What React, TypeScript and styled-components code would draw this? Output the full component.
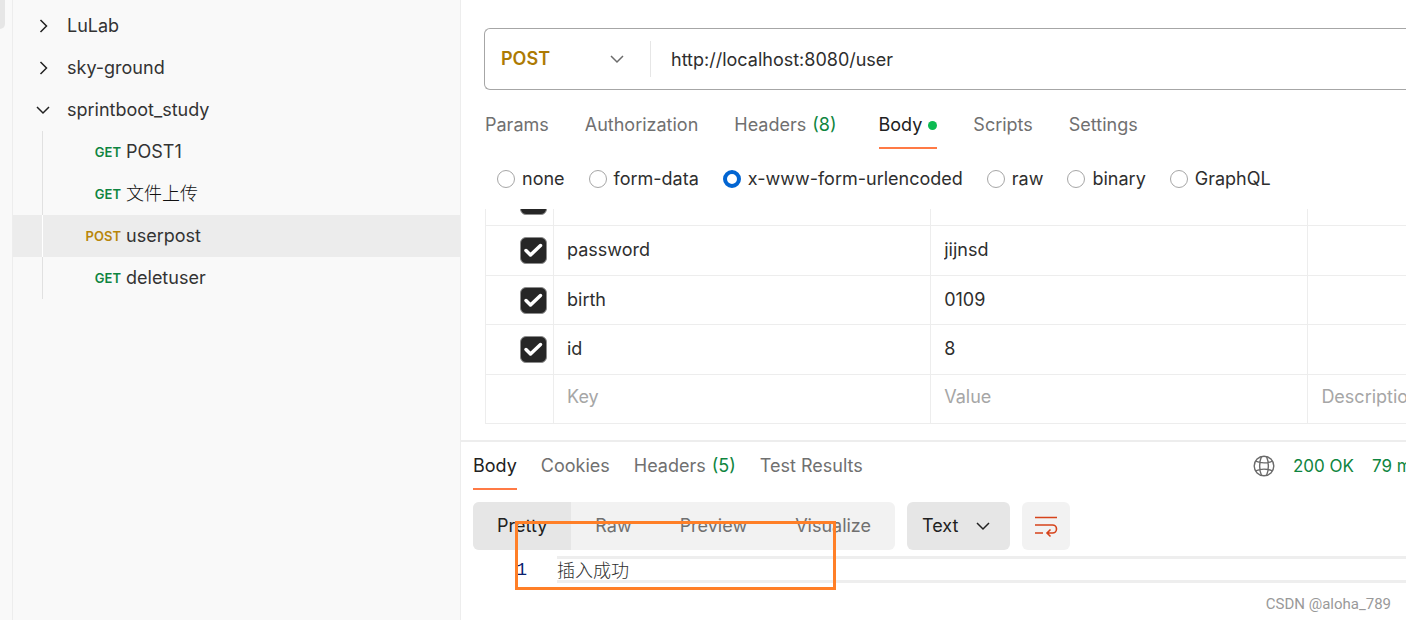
import React, { useState } from "react";
import styled, { createGlobalStyle } from "styled-components";

const GlobalStyle = createGlobalStyle`
  *, *::before, *::after { box-sizing: border-box; }
  body {
    margin: 0;
    background: #fff;
    color: #2e2e2e;
    font: 400 18px/24px Inter, "Noto Sans CJK SC", sans-serif;
    overflow: hidden;
  }
  button, input, select { font: inherit; color: inherit; }
  button { border: 0; padding: 0; background: none; cursor: pointer; }
`;

const Page = styled.div`
  position: relative;
  display: flex;
  min-height: 100vh;
`;

const Rail = styled.div`
  flex: 0 0 13px;
  background: #f9f9f9;
  border-right: 1px solid #ededed;
`;

const RailThumb = styled.div`
  width: 5px;
  height: 29px;
  background: #e6e6e6;
  border-bottom-right-radius: 5px;
`;

const Sidebar = styled.nav`
  flex: 0 0 448px;
  padding-top: 5px;
  background: #f9f9f9;
  border-right: 1px solid #ededed;
`;

const Collection = styled.button`
  display: flex;
  align-items: center;
  gap: 17px;
  width: 100%;
  height: 42px;
  padding-left: 23px;
  color: #333;
`;

const RequestRow = styled.a<{ $active?: boolean }>`
  display: flex;
  align-items: center;
  gap: 5px;
  height: 42px;
  padding-left: 29px;
  color: #333;
  text-decoration: none;
  background: ${(p) => (p.$active ? "#ececec" : "transparent")};
  &::before {
    content: "";
    align-self: stretch;
    width: 1px;
    background: ${(p) => (p.$active ? "#fff" : "#e1e1e1")};
  }
`;

const MethodTag = styled.span<{ $post?: boolean }>`
  width: 73px;
  font-size: 13px;
  font-weight: 600;
  text-align: right;
  color: ${(p) => (p.$post ? "#b8860b" : "#0f8540")};
`;

const RequestName = styled.span`
  &:lang(zh) { font-weight: 300; color: #111; }
`;

const Main = styled.main`
  flex: 1;
  min-width: 0;
  overflow: hidden;
`;

const RequestPane = styled.section`
  padding: 28px 0 16px 24px;
  border-bottom: 2px solid #ededed;
`;

const UrlBar = styled.div`
  display: flex;
  align-items: center;
  height: 62px;
  margin-left: -1px;
  border: 1px solid #a6a6a6;
  border-right: 0;
  border-radius: 6px 0 0 6px;
`;

const SelectShell = styled.div`
  display: grid;
  flex: 0 0 166px;
  align-items: center;
  border-right: 1px solid #e6e6e6;
  > * { grid-area: 1 / 1; }
  > svg {
    justify-self: end;
    margin-right: 26px;
    pointer-events: none;
  }
`;

const MethodSelect = styled.select`
  appearance: none;
  width: 100%;
  height: 36px;
  padding: 0 16px;
  border: 0;
  background: none;
  color: #ad7a03;
  font-weight: 600;
`;

const UrlInput = styled.input`
  flex: 1;
  min-width: 0;
  height: 48px;
  padding: 0 20px;
  border: 0;
  outline: 0;
  background: none;
`;

const Tabs = styled.div<{ $gap: number }>`
  display: flex;
  gap: ${(p) => p.$gap}px;
  height: 48px;
`;

const RequestTabs = styled(Tabs)`
  margin-top: 11px;
`;

const Tab = styled.button<{ $active?: boolean; $spaced?: boolean }>`
  display: flex;
  align-items: center;
  gap: 6px;
  padding-right: ${(p) => (p.$spaced ? 6 : 0)}px;
  border-top: 2px solid transparent;
  border-bottom: 2px solid ${(p) => (p.$active ? "#ff7a45" : "transparent")};
  color: ${(p) => (p.$active ? "#212121" : "#707070")};
  white-space: nowrap;
`;

const Count = styled.span`
  color: #0f8540;
`;

const Dot = styled.span`
  width: 9px;
  height: 9px;
  border-radius: 50%;
  background: #0cbb52;
`;

const ModeGroup = styled.div`
  display: flex;
  align-items: center;
  gap: 24px;
  height: 60px;
  padding-left: 12px;
`;

const ModeLabel = styled.label`
  display: flex;
  align-items: center;
  gap: 7px;
  white-space: nowrap;
`;

const Radio = styled.input`
  appearance: none;
  width: 18px;
  height: 18px;
  margin: 0;
  border: 1px solid #a6a6a6;
  border-radius: 50%;
  background: #fff;
  &:checked { border: 4px solid #0265d2; }
`;

const TableViewport = styled.div`
  display: flex;
  flex-direction: column;
  justify-content: flex-end;
  height: 215px;
  overflow: hidden;
`;

const ParamTable = styled.table`
  width: 100%;
  table-layout: fixed;
  border-spacing: 0;
  border-left: 1px solid #ededed;
`;

const ParamRow = styled.tr`
  height: 50px;
  &:nth-child(odd) { height: 49px; }
  &:last-child td { padding-bottom: 4px; }
`;

const Cell = styled.td`
  padding: 0 13px 1px;
  border-right: 1px solid #ededed;
  border-bottom: 1px solid #ededed;
  white-space: nowrap;
  overflow: hidden;
  &:last-child { padding-right: 0; border-right: 0; }
`;

const CheckCell = styled(Cell)`
  padding: 0 6px;
`;

const CellInput = styled.input`
  display: block;
  width: 100%;
  height: 24px;
  padding: 0;
  border: 0;
  outline: 0;
  background: none;
  &::placeholder { color: #a6a6a6; opacity: 1; }
`;

const Check = styled.input`
  appearance: none;
  display: block;
  width: 27px;
  height: 27px;
  margin: 0 0 0 auto;
  border: 1px solid #8c8c8c;
  border-radius: 6px;
  grid-area: 1 / 1;
  &:checked { background: #262626; }
`;

const CheckBoxShell = styled.span`
  display: grid;
  justify-items: end;
  > svg {
    grid-area: 1 / 1;
    pointer-events: none;
    z-index: 1;
  }
`;

const ResponsePane = styled.section`
  padding-left: 12px;
`;

const ResponseHead = styled.div`
  display: flex;
  justify-content: space-between;
`;

const Status = styled.div`
  display: flex;
  align-items: center;
  gap: 18px;
  width: 153px;
  overflow: hidden;
  white-space: nowrap;
  color: #0f8540;
  font-size: 17px;
  > * { flex: none; }
`;

const Toolbar = styled.div`
  display: flex;
  gap: 12px;
  height: 48px;
  margin: 12px 0 6px;
`;

const Segments = styled.div`
  display: flex;
  border-radius: 6px;
  background: #f2f2f2;
  overflow: hidden;
`;

const Segment = styled.button<{ $active?: boolean }>`
  padding: 0 24px;
  background: ${(p) => (p.$active ? "#e6e6e6" : "transparent")};
  color: ${(p) => (p.$active ? "#212121" : "#707070")};
`;

const FormatShell = styled(SelectShell)`
  flex-basis: 103px;
  border: 0;
  border-radius: 6px;
  background: #e6e6e6;
  > svg { margin-right: 20px; }
`;

const FormatSelect = styled(MethodSelect)`
  height: 48px;
  padding: 0 15px;
  color: #212121;
  font-weight: 400;
`;

const WrapButton = styled.button`
  display: grid;
  place-items: center;
  width: 48px;
  border-radius: 6px;
  background: #f2f2f2;
`;

const CodeLine = styled.div`
  display: flex;
  align-items: center;
  height: 27px;
`;

const LineNumber = styled.span`
  width: 84px;
  padding-right: 30px;
  text-align: right;
  color: #0b216f;
  font-family: "Liberation Mono", monospace;
`;

const LineText = styled.code`
  flex: 1;
  height: 27px;
  border: 3px solid #eee;
  border-right: 0;
  border-left-width: 0;
  line-height: 20px;
  font-family: "Noto Sans CJK SC", sans-serif;
  font-weight: 300;
`;

const Highlight = styled.div`
  position: absolute;
  left: 515px;
  top: 521px;
  width: 321px;
  height: 69px;
  border: 3px solid #ff7f27;
  pointer-events: none;
`;

const Watermark = styled.div`
  position: absolute;
  right: 15px;
  bottom: 4px;
  color: #999;
  font: 400 15px/24px Roboto, sans-serif;
`;

function Chevron({ right, color = "#212121" }: { right?: boolean; color?: string }) {
  return (
    <svg width="14" height="14" viewBox="0 0 14 14" fill="none" stroke={color} strokeWidth="1.5" aria-hidden="true">
      <path d={right ? "M4.5 1l6 6-6 6" : "M1 4l6 6 6-6"} />
    </svg>
  );
}

function GlobeIcon() {
  return (
    <svg width="22" height="22" viewBox="0 0 22 22" fill="none" stroke="#6b6b6b" strokeWidth="1.4" aria-hidden="true">
      <circle cx="11" cy="11" r="9.8" />
      <path d="M8.500 1.500C6 7 6 15 8.500 20.500M13.500 1.500c2.500 5.500 2.500 13.500 0 19M2.500 6.200c5 2 12 2 17 0M2.500 15.800c5-2 12-2 17 0" />
    </svg>
  );
}

function WrapIcon() {
  return (
    <svg width="24" height="24" viewBox="0 0 24 24" fill="none" stroke="#d6431b" strokeWidth="1.6" aria-hidden="true">
      <path d="M1 3.500h22M1 11h17.500a4 4 0 0 1 0 8H13M1 19h8M16.500 15.500l-3.500 3.500 3.500 3.500" />
    </svg>
  );
}

const requests = [
  { method: "GET", name: "POST1" },
  { method: "GET", name: "文件上传", lang: "zh" },
  { method: "POST", name: "userpost", active: true },
  { method: "GET", name: "deletuser" },
];

const modes = ["none", "form-data", "x-www-form-urlencoded", "raw", "binary", "GraphQL"];

const params = [
  { key: "", value: "" },
  { key: "password", value: "jijnsd" },
  { key: "birth", value: "0109" },
  { key: "id", value: "8" },
];

export default function App() {
  const [mode, setMode] = useState("x-www-form-urlencoded");
  return (
    <Page>
      <GlobalStyle />
      <Rail>
        <RailThumb />
      </Rail>
      <Sidebar>
        <Collection><Chevron right />LuLab</Collection>
        <Collection><Chevron right />sky-ground</Collection>
        <Collection><Chevron />sprintboot_study</Collection>
        {requests.map((r) => (
          <RequestRow key={r.name} href="#" $active={r.active}>
            <MethodTag $post={r.method === "POST"}>{r.method}</MethodTag>
            <RequestName lang={r.lang}>{r.name}</RequestName>
          </RequestRow>
        ))}
      </Sidebar>
      <Main>
        <RequestPane>
          <UrlBar>
            <SelectShell>
              <MethodSelect aria-label="Method" defaultValue="POST">
                <option>GET</option>
                <option>POST</option>
              </MethodSelect>
              <Chevron color="#6b6b6b" />
            </SelectShell>
            <UrlInput aria-label="Request URL" defaultValue="http://localhost:8080/user" />
          </UrlBar>
          <RequestTabs $gap={36}>
            <Tab>Params</Tab>
            <Tab>Authorization</Tab>
            <Tab $spaced>Headers <Count>(8)</Count></Tab>
            <Tab $active>Body <Dot /></Tab>
            <Tab>Scripts</Tab>
            <Tab>Settings</Tab>
          </RequestTabs>
          <ModeGroup>
            {modes.map((m) => (
              <ModeLabel key={m}>
                <Radio type="radio" name="mode" checked={mode === m} onChange={() => setMode(m)} />
                {m}
              </ModeLabel>
            ))}
          </ModeGroup>
          <TableViewport>
            <ParamTable>
              <colgroup>
                <col style={{ width: 68 }} />
                <col style={{ width: "41%" }} />
                <col style={{ width: "41%" }} />
                <col />
              </colgroup>
              <tbody>
                {params.map((p, i) => (
                  <ParamRow key={i}>
                    <CheckCell>
                      <CheckBoxShell>
                        <Check type="checkbox" defaultChecked aria-label={"Enable " + p.key} />
                        <svg width="27" height="27" viewBox="0 0 27 27" fill="none" stroke="#fff" strokeWidth="3.500" strokeLinecap="round" strokeLinejoin="round" aria-hidden="true">
                          <path d="M6 13.500l4.500 4.500L20.500 8.500" />
                        </svg>
                      </CheckBoxShell>
                    </CheckCell>
                    <Cell><CellInput aria-label="Key" defaultValue={p.key} /></Cell>
                    <Cell><CellInput aria-label="Value" defaultValue={p.value} /></Cell>
                    <Cell />
                  </ParamRow>
                ))}
                <ParamRow>
                  <CheckCell />
                  <Cell><CellInput aria-label="New key" placeholder="Key" /></Cell>
                  <Cell><CellInput aria-label="New value" placeholder="Value" /></Cell>
                  <Cell><CellInput aria-label="New description" placeholder="Description" /></Cell>
                </ParamRow>
              </tbody>
            </ParamTable>
          </TableViewport>
        </RequestPane>
        <ResponsePane>
          <ResponseHead>
            <Tabs $gap={24}>
              <Tab $active>Body</Tab>
              <Tab>Cookies</Tab>
              <Tab>Headers <Count>(5)</Count></Tab>
              <Tab>Test Results</Tab>
            </Tabs>
            <Status>
              <GlobeIcon />
              <span>200 OK</span>
              <span>79 ms</span>
            </Status>
          </ResponseHead>
          <Toolbar>
            <Segments>
              <Segment $active>Pretty</Segment>
              <Segment>Raw</Segment>
              <Segment>Preview</Segment>
              <Segment>Visualize</Segment>
            </Segments>
            <FormatShell>
              <FormatSelect aria-label="Format" defaultValue="Text">
                <option>Text</option>
                <option>JSON</option>
              </FormatSelect>
              <Chevron />
            </FormatShell>
            <WrapButton aria-label="Wrap lines"><WrapIcon /></WrapButton>
          </Toolbar>
          <CodeLine>
            <LineNumber>1</LineNumber>
            <LineText lang="zh">插入成功</LineText>
          </CodeLine>
        </ResponsePane>
      </Main>
      <Highlight />
      <Watermark>CSDN @aloha_789</Watermark>
    </Page>
  );
}
